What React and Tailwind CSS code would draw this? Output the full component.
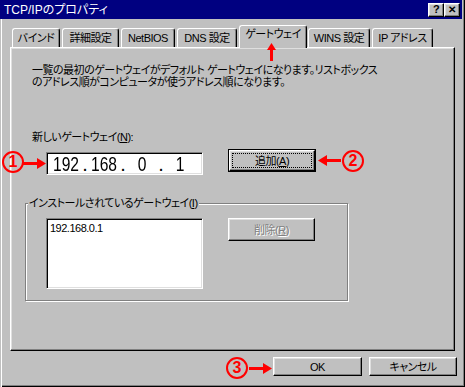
import React from 'react'

const raised =
  'border border-t-white border-l-white border-r-black border-b-black shadow-[inset_-1px_-1px_0_#808080,inset_1px_1px_0_#dfdfdf]'
const sunken =
  'border border-t-[#808080] border-l-[#808080] border-r-white border-b-white shadow-[inset_1px_1px_0_#000,inset_-1px_-1px_0_#dfdfdf]'

const tabs = [
  { label: 'バインド', cls: 'ml-[12px] w-[48px]' },
  { label: '詳細設定', cls: 'ml-[2px] w-[57px]' },
  { label: 'NetBIOS', cls: 'ml-[2px] w-[54px]' },
  { label: 'DNS 設定', cls: 'ml-[2px] w-[60px]' },
  { label: 'ゲートウェイ', cls: 'ml-[2px] w-[68px]', active: true },
  { label: 'WINS 設定', cls: 'ml-[1px] w-[62px]' },
  { label: 'IP アドレス', cls: 'ml-[2px] w-[61px]' },
]

function Circled({ n, className }) {
  return (
    <div
      className={`absolute w-[22px] h-[22px] rounded-full border-2 border-[#ff0000] text-[#ff0000] flex items-center justify-center text-[16px] leading-none font-bold tracking-normal font-['Liberation_Sans',sans-serif] ${className}`}
    >
      {n}
    </div>
  )
}

function ArrowH({ left, className }) {
  return (
    <svg className={`absolute ${className}`} width="23" height="11" viewBox="0 0 23 11">
      {left ? (
        <>
          <polygon points="0,5.5 9,0 9,11" fill="#ff0000" />
          <rect x="8" y="4" width="15" height="3" fill="#ff0000" />
        </>
      ) : (
        <>
          <rect x="0" y="4" width="15" height="3" fill="#ff0000" />
          <polygon points="23,5.5 14,0 14,11" fill="#ff0000" />
        </>
      )}
    </svg>
  )
}

function Tab({ label, cls, active }) {
  if (active) {
    return (
      <div
        className={`${cls} relative z-10 h-[23px] mb-[-1px] bg-[#c0c0c0] border-t border-l border-r border-t-white border-l-white border-r-black rounded-t-[3px] shadow-[inset_-1px_0_0_#808080] flex justify-center pt-[2px]`}
      >
        {label}
      </div>
    )
  }
  return (
    <div
      className={`${cls} h-[19px] border-t border-l border-r border-t-white border-l-white border-r-black rounded-t-[3px] shadow-[inset_-1px_0_0_#808080] flex justify-center pt-[3px]`}
    >
      {label}
    </div>
  )
}

function Octet({ v }) {
  return <span className="w-[26px] flex justify-center scale-x-[0.78]">{v}</span>
}

function Dot() {
  return <span className="w-[12px] text-center">.</span>
}

export default function App() {
  return (
    <div className="relative w-[465px] h-[387px] bg-[#c0c0c0] overflow-hidden text-black text-[11px] leading-[12px] tracking-[-0.5px] font-['Liberation_Sans','Noto_Sans_CJK_JP',sans-serif] [font-feature-settings:'palt'] shadow-[inset_1px_0_0_#c0c0c0,inset_2px_0_0_#fff,inset_-1px_-1px_0_#000,inset_-2px_-2px_0_#808080]">
      {/* title bar */}
      <div className="h-[19px] mr-[3px] bg-[#000080] flex items-center pl-[4px] pr-[2px]">
        <span className="text-white text-[12px] leading-[12px] tracking-normal">TCP/IPのプロパティ</span>
        <div className="ml-auto flex">
          <div className={`${raised} w-[16px] h-[14px] bg-[#c0c0c0] flex items-center justify-center text-[11px] font-bold leading-none`}>?</div>
          <div className={`${raised} w-[16px] h-[14px] bg-[#c0c0c0] flex items-center justify-center text-[10px] font-bold leading-none`}>✕</div>
        </div>
      </div>

      {/* tabs */}
      <div className="mt-[6px] h-[22px] flex items-end">
        {tabs.map((t) => (
          <Tab key={t.label} {...t} />
        ))}
      </div>

      {/* panel */}
      <div className={`${raised} ml-[10px] w-[445px] h-[304px] bg-[#c0c0c0] flex flex-col`}>
        <div className="mt-[16px] ml-[21px]">
          <div>一覧の最初のゲートウェイがデフォルト ゲートウェイになります。リストボックス</div>
          <div>のアドレス順がコンピュータが使うアドレス順になります。</div>
        </div>

        <div className="mt-[43px] ml-[21px]">
          新しいゲートウェイ(<span className="underline">N</span>):
        </div>

        <div className="mt-[6px] ml-[35px] flex items-start">
          <div className={`${sunken} mt-[3px] w-[157px] h-[23px] bg-white flex items-center pl-[6px] font-['Liberation_Sans',sans-serif] text-[20px] leading-none tracking-normal`}>
            <Octet v="192" />
            <Dot />
            <Octet v="168" />
            <Dot />
            <Octet v="0" />
            <Dot />
            <Octet v="1" />
          </div>
          <div className="ml-[25px] w-[88px] h-[23px] border border-black">
            <div className={`${raised} w-full h-full p-[2px]`}>
              <div className="w-full h-full border border-dotted border-black flex items-center justify-center">
                追加(<span className="underline">A</span>)
              </div>
            </div>
          </div>
        </div>

        {/* installed gateways group */}
        <div className="relative mt-[28px] ml-[14px] w-[323px] h-[98px] border border-[#808080] shadow-[1px_1px_0_#fff,inset_1px_1px_0_#fff] flex items-start pl-[20px] pt-[14px]">
          <span className="absolute left-[2px] top-[-7px] px-[1px] bg-[#c0c0c0]">
            インストールされているゲートウェイ(<span className="underline">I</span>)
          </span>
          <div className={`${sunken} w-[157px] h-[71px] bg-white px-[3px] pt-[3px]`}>192.168.0.1</div>
          <div className={`${raised} ml-[25px] w-[87px] h-[23px] flex items-center justify-center text-[#808080] [text-shadow:1px_1px_0_#fff]`}>
            削除(<span className="underline">R</span>)
          </div>
        </div>
      </div>

      {/* dialog buttons */}
      <div className="mt-[6px] ml-[273px] flex gap-[7px]">
        <div className={`${raised} w-[89px] h-[19px] flex items-center justify-center`}>OK</div>
        <div className={`${raised} w-[88px] h-[19px] flex items-center justify-center`}>キャンセル</div>
      </div>

      {/* annotations */}
      <Circled n="1" className="left-[2px] top-[151px]" />
      <ArrowH className="left-[23px] top-[158px]" />
      <ArrowH left className="left-[318px] top-[155px]" />
      <Circled n="2" className="left-[342px] top-[150px]" />
      <Circled n="3" className="left-[226px] top-[357px]" />
      <ArrowH className="left-[249px] top-[363px]" />
      <svg className="absolute left-[267px] top-[43px] z-20" width="9" height="18" viewBox="0 0 9 18">
        <polygon points="4.5,0 9,7 0,7" fill="#ff0000" />
        <rect x="3" y="6" width="3" height="12" fill="#ff0000" />
      </svg>
    </div>
  )
}
